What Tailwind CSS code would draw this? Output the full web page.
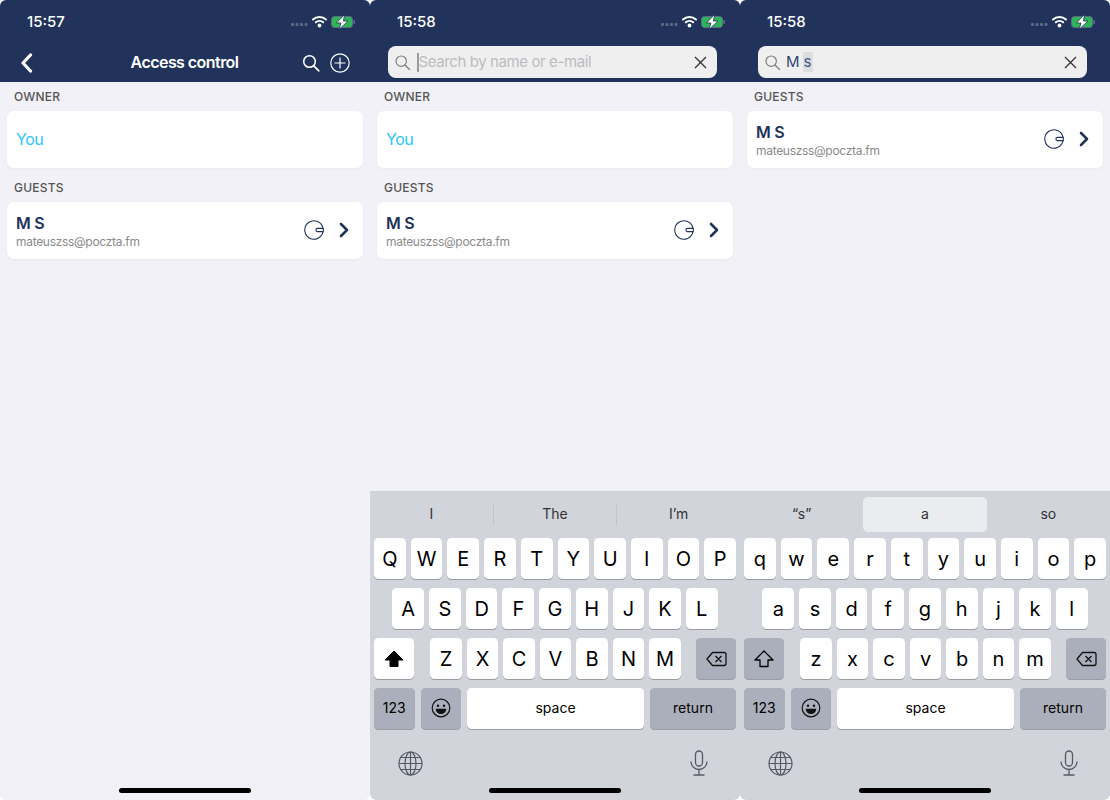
<!DOCTYPE html>
<html><head><meta charset="utf-8"><script src="https://cdn.jsdelivr.net/npm/@tailwindcss/browser@4"></script></head>
<body class="bg-white">
<div class="flex w-[1110px] h-[800px] overflow-hidden font-['Inter','Liberation_Sans',sans-serif]">

<!-- Phone 1 -->
<section class="w-[370px] h-[800px] shrink-0 flex flex-col bg-[#f1f1f7] rounded-[6px] overflow-hidden relative">
  <header class="h-[82px] bg-[#21335b] shrink-0 flex flex-col">
    <div class="h-[44px] flex items-center justify-between pl-[27px] pr-[15px] text-white text-[15px] font-medium">
      <span>15:57</span>
      <svg width="64" height="14" viewBox="0 0 64 14"><g fill="#5d6a88"><rect x="0" y="8" width="3" height="3" rx="1"/><rect x="4.5" y="8" width="3" height="3" rx="1"/><rect x="9" y="8" width="3" height="3" rx="1"/><rect x="13.5" y="8" width="3" height="3" rx="1"/></g><g fill="none" stroke="#fff" stroke-width="2" stroke-linecap="round"><path d="M22 4.5a9.5 9.5 0 0 1 13 0"/><path d="M24.8 7.3a5.6 5.6 0 0 1 7.4 0"/></g><circle cx="28.5" cy="10.5" r="1.9" fill="#fff"/><rect x="40.5" y="1.5" width="21" height="11" rx="3" fill="#2fb457" stroke="#5d6a88"/><rect x="62.3" y="5" width="1.7" height="4" rx="0.8" fill="#5d6a88"/><path d="M53.5 -0.5 45.5 8h4.5l-2 6.5L57 6h-4.5z" fill="#fff" stroke="#21335b" stroke-width="0.8"/></svg>
    </div>
    <div class="h-[38px] flex items-center justify-between pl-[20px] pr-[20px] relative">
      <svg width="13" height="20" viewBox="0 0 13 20"><path d="M10.5 2 3 10l7.5 8" fill="none" stroke="#fff" stroke-width="3.2" stroke-linecap="round" stroke-linejoin="round"/></svg>
      <h1 class="absolute left-0 right-0 pb-[2px] pr-[1px] text-center text-white text-[16px] font-semibold tracking-[-0.55px]">Access control</h1>
      <div class="flex items-center gap-[10px]">
        <svg width="18" height="18" viewBox="0 0 18 18"><circle cx="7.5" cy="7.5" r="5.8" fill="none" stroke="#fff" stroke-width="1.5"/><path d="m11.8 11.8 5 5" stroke="#fff" stroke-width="1.7" stroke-linecap="round"/></svg>
        <svg width="20" height="20" viewBox="0 0 20 20"><circle cx="10" cy="10" r="9.2" fill="none" stroke="#fff" stroke-width="1.2"/><path d="M10 4.5v11M4.5 10h11" stroke="#fff" stroke-width="1.2"/></svg>
      </div>
    </div>
  </header>
  <main class="px-[7px]">
    <h2 class="pl-[7px] h-[29px] flex items-center text-[12px] tracking-[0.2px] font-medium text-[#555] uppercase">Owner</h2>
    <div class="h-[57px] pb-[2px] bg-white rounded-[7px] flex items-center px-[9px] text-[16px] tracking-[-0.5px] text-[#2cc5fa] shadow-[0_1px_3px_rgba(0,0,0,0.04)]">You</div>
    <h2 class="pl-[7px] mt-[5px] h-[29px] flex items-center text-[12px] tracking-[0.2px] font-medium text-[#555] uppercase">Guests</h2>
    <div class="h-[57px] pb-[1px] bg-white rounded-[7px] flex items-center pl-[9px] pr-[14px] shadow-[0_1px_3px_rgba(0,0,0,0.04)]">
      <div class="flex-1 pt-[3px]"><p class="text-[16px] leading-[19px] font-semibold text-[#21335b] tracking-[-0.3px]">M S</p><p class="text-[12px] leading-[17px] text-[#8a8a8a] tracking-[-0.3px]">mateuszss@poczta.fm</p></div>
      <svg width="20" height="20" viewBox="0 0 20 20"><path d="M19 8.3A9.2 9.2 0 1 0 19 11.7" fill="none" stroke="#21335b" stroke-width="1.1"/><path d="M19.3 8.4H13.5a1.6 1.6 0 0 0 0 3.2h5.8z" fill="#fff" stroke="#21335b" stroke-width="1.1"/></svg>
      <svg class="ml-[15px]" width="10" height="16" viewBox="0 0 10 16"><path d="m2 2 6 6-6 6" fill="none" stroke="#21335b" stroke-width="2.6" stroke-linecap="round" stroke-linejoin="round"/></svg>
    </div>
  </main>
  <div class="absolute left-[119px] bottom-[7px] w-[132px] h-[5px] rounded-full bg-black"></div>
</section>

<!-- Phone 2 -->
<section class="w-[370px] h-[800px] shrink-0 flex flex-col bg-[#f1f1f7] rounded-[6px] overflow-hidden relative">
  <header class="h-[82px] bg-[#21335b] shrink-0 flex flex-col">
    <div class="h-[44px] flex items-center justify-between pl-[27px] pr-[15px] text-white text-[15px] font-medium">
      <span>15:58</span>
      <svg width="64" height="14" viewBox="0 0 64 14"><g fill="#5d6a88"><rect x="0" y="8" width="3" height="3" rx="1"/><rect x="4.5" y="8" width="3" height="3" rx="1"/><rect x="9" y="8" width="3" height="3" rx="1"/><rect x="13.5" y="8" width="3" height="3" rx="1"/></g><g fill="none" stroke="#fff" stroke-width="2" stroke-linecap="round"><path d="M22 4.5a9.5 9.5 0 0 1 13 0"/><path d="M24.8 7.3a5.6 5.6 0 0 1 7.4 0"/></g><circle cx="28.5" cy="10.5" r="1.9" fill="#fff"/><rect x="40.5" y="1.5" width="21" height="11" rx="3" fill="#2fb457" stroke="#5d6a88"/><rect x="62.3" y="5" width="1.7" height="4" rx="0.8" fill="#5d6a88"/><path d="M53.5 -0.5 45.5 8h4.5l-2 6.5L57 6h-4.5z" fill="#fff" stroke="#21335b" stroke-width="0.8"/></svg>
    </div>
    <div class="ml-[18px] w-[329px] h-[32px] mt-[2px] bg-[#efeff0] rounded-[8px] flex items-center pl-[7px] pr-[10px]">
      <svg width="15" height="15" viewBox="0 0 15 15"><circle cx="6.2" cy="6.2" r="5.2" fill="none" stroke="#7d7d7d" stroke-width="1.2"/><path d="m10 10 4.5 4.5" stroke="#7d7d7d" stroke-width="1.3" stroke-linecap="round"/></svg>
      <span class="ml-[7px] w-[1.5px] h-[19px] bg-[#9a9aa0]"></span>
      <span class="flex-1 text-[15px] tracking-[-0.4px] text-[#bcbcbe]">Search by name or e-mail</span>
      <svg width="13" height="13" viewBox="0 0 13 13"><path d="m1 1 11 11M12 1 1 12" stroke="#333" stroke-width="1.3"/></svg>
    </div>
  </header>
  <main class="px-[7px]">
    <h2 class="pl-[7px] h-[29px] flex items-center text-[12px] tracking-[0.2px] font-medium text-[#555] uppercase">Owner</h2>
    <div class="h-[57px] pb-[2px] bg-white rounded-[7px] flex items-center px-[9px] text-[16px] tracking-[-0.5px] text-[#2cc5fa] shadow-[0_1px_3px_rgba(0,0,0,0.04)]">You</div>
    <h2 class="pl-[7px] mt-[5px] h-[29px] flex items-center text-[12px] tracking-[0.2px] font-medium text-[#555] uppercase">Guests</h2>
    <div class="h-[57px] pb-[1px] bg-white rounded-[7px] flex items-center pl-[9px] pr-[14px] shadow-[0_1px_3px_rgba(0,0,0,0.04)]">
      <div class="flex-1 pt-[3px]"><p class="text-[16px] leading-[19px] font-semibold text-[#21335b] tracking-[-0.3px]">M S</p><p class="text-[12px] leading-[17px] text-[#8a8a8a] tracking-[-0.3px]">mateuszss@poczta.fm</p></div>
      <svg width="20" height="20" viewBox="0 0 20 20"><path d="M19 8.3A9.2 9.2 0 1 0 19 11.7" fill="none" stroke="#21335b" stroke-width="1.1"/><path d="M19.3 8.4H13.5a1.6 1.6 0 0 0 0 3.2h5.8z" fill="#fff" stroke="#21335b" stroke-width="1.1"/></svg>
      <svg class="ml-[15px]" width="10" height="16" viewBox="0 0 10 16"><path d="m2 2 6 6-6 6" fill="none" stroke="#21335b" stroke-width="2.6" stroke-linecap="round" stroke-linejoin="round"/></svg>
    </div>
  </main>
  <div class="mt-auto h-[309px] bg-[#d1d4db] rounded-b-[6px] flex flex-col text-black">
    <div class="h-[47px] flex items-center pb-[2px] text-[14px] text-[#333]">
      <span class="flex-1 flex items-center justify-center">I</span>
      <span class="w-px h-[22px] bg-[#c2c5cd]"></span>
      <span class="flex-1 flex items-center justify-center">The</span>
      <span class="w-px h-[22px] bg-[#c2c5cd]"></span>
      <span class="flex-1 flex items-center justify-center">I’m</span>
    </div>
    <div class="flex gap-[5px] px-[4px] h-[41px] text-[20px] *:flex-1 *:flex *:items-center *:justify-center *:bg-white *:rounded-[4.5px] *:shadow-[0_1px_0_#9a9ca3]">
      <span>Q</span><span>W</span><span>E</span><span>R</span><span>T</span><span>Y</span><span>U</span><span>I</span><span>O</span><span>P</span>
    </div>
    <div class="flex gap-[5px] justify-center mt-[9px] h-[41px] text-[20px] *:w-[31.7px] *:flex *:items-center *:justify-center *:bg-white *:rounded-[4.5px] *:shadow-[0_1px_0_#9a9ca3]">
      <span>A</span><span>S</span><span>D</span><span>F</span><span>G</span><span>H</span><span>J</span><span>K</span><span>L</span>
    </div>
    <div class="flex px-[4px] justify-between mt-[9px] h-[41px] text-[20px]">
      <div class="w-[40px] bg-white rounded-[4.5px] shadow-[0_1px_0_#9a9ca3] flex items-center justify-center"><svg width="20" height="18" viewBox="0 0 20 18"><path d="M10 1 1 10h5v6.5h8V10h5z" fill="#000" stroke="#000" stroke-linejoin="round"/></svg></div>
      <div class="ml-[1px] flex gap-[5px] *:w-[31.5px] *:flex *:items-center *:justify-center *:bg-white *:rounded-[4.5px] *:shadow-[0_1px_0_#9a9ca3]"><span>Z</span><span>X</span><span>C</span><span>V</span><span>B</span><span>N</span><span>M</span></div>
      <div class="w-[40px] bg-[#abafbb] rounded-[4.5px] shadow-[0_1px_0_#9a9ca3] flex items-center justify-center"><svg width="21" height="16" viewBox="0 0 21 16"><path d="M6.5 1.5H18a2 2 0 0 1 2 2v9a2 2 0 0 1-2 2H6.5L1 8zM9.5 5l6 6M15.5 5l-6 6" fill="none" stroke="#111" stroke-width="1.3" stroke-linejoin="round"/></svg></div>
    </div>
    <div class="flex gap-[6px] px-[4px] mt-[9px] h-[41px] text-[14px] *:pb-[2px]">
      <div class="w-[40.5px] bg-[#abafbb] rounded-[4.5px] shadow-[0_1px_0_#9a9ca3] flex items-center justify-center">123</div>
      <div class="w-[40.5px] bg-[#abafbb] rounded-[4.5px] shadow-[0_1px_0_#9a9ca3] flex items-center justify-center"><svg width="20" height="20" viewBox="0 0 20 20"><circle cx="10" cy="10" r="8.8" fill="none" stroke="#111" stroke-width="1.2"/><circle cx="7" cy="7.7" r="1.2" fill="#111"/><circle cx="13" cy="7.7" r="1.2" fill="#111"/><path d="M4.7 10.8h10.6a5.3 5.3 0 0 1-10.6 0z" fill="#111"/></svg></div>
      <div class="flex-1 bg-white rounded-[4.5px] shadow-[0_1px_0_#9a9ca3] flex items-center justify-center">space</div>
      <div class="w-[86px] bg-[#abafbb] rounded-[4.5px] shadow-[0_1px_0_#9a9ca3] flex items-center justify-center">return</div>
    </div>
    <div class="flex justify-between items-center pl-[28px] pr-[32px] mt-[21px]">
      <svg width="25" height="25" viewBox="0 0 25 25" fill="none" stroke="#555962" stroke-width="1.2"><circle cx="12.5" cy="12.5" r="11.5"/><ellipse cx="12.5" cy="12.5" rx="5.5" ry="11.5"/><path d="M12.5 1v23M1 12.5h23M2.7 6.5h19.6M2.7 18.5h19.6"/></svg>
      <svg width="18" height="26" viewBox="0 0 18 26" fill="none" stroke="#555962" stroke-width="1.3"><rect x="5.5" y="1" width="7" height="15" rx="3.5"/><path d="M1 11.5a8 8 0 0 0 16 0M9 19.5V25M3.5 25h11"/></svg>
    </div>
  </div>
  <div class="absolute left-[119px] bottom-[7px] w-[132px] h-[5px] rounded-full bg-black"></div>
</section>

<!-- Phone 3 -->
<section class="w-[370px] h-[800px] shrink-0 flex flex-col bg-[#f1f1f7] rounded-[6px] overflow-hidden relative">
  <header class="h-[82px] bg-[#21335b] shrink-0 flex flex-col">
    <div class="h-[44px] flex items-center justify-between pl-[27px] pr-[15px] text-white text-[15px] font-medium">
      <span>15:58</span>
      <svg width="64" height="14" viewBox="0 0 64 14"><g fill="#5d6a88"><rect x="0" y="8" width="3" height="3" rx="1"/><rect x="4.5" y="8" width="3" height="3" rx="1"/><rect x="9" y="8" width="3" height="3" rx="1"/><rect x="13.5" y="8" width="3" height="3" rx="1"/></g><g fill="none" stroke="#fff" stroke-width="2" stroke-linecap="round"><path d="M22 4.5a9.5 9.5 0 0 1 13 0"/><path d="M24.8 7.3a5.6 5.6 0 0 1 7.4 0"/></g><circle cx="28.5" cy="10.5" r="1.9" fill="#fff"/><rect x="40.5" y="1.5" width="21" height="11" rx="3" fill="#2fb457" stroke="#5d6a88"/><rect x="62.3" y="5" width="1.7" height="4" rx="0.8" fill="#5d6a88"/><path d="M53.5 -0.5 45.5 8h4.5l-2 6.5L57 6h-4.5z" fill="#fff" stroke="#21335b" stroke-width="0.8"/></svg>
    </div>
    <div class="ml-[18px] w-[329px] h-[32px] mt-[2px] bg-[#efeff0] rounded-[8px] flex items-center pl-[7px] pr-[10px]">
      <svg width="15" height="15" viewBox="0 0 15 15"><circle cx="6.2" cy="6.2" r="5.2" fill="none" stroke="#7d7d7d" stroke-width="1.2"/><path d="m10 10 4.5 4.5" stroke="#7d7d7d" stroke-width="1.3" stroke-linecap="round"/></svg>
      <span class="ml-[6px] text-[15px] text-[#2f4570]">M</span>
      <span class="ml-[3px] w-[10px] h-[20px] text-[15px] leading-[20px] text-center bg-[#dcdee1] text-[#3f5587]">s</span>
      <span class="flex-1"></span>
      <svg width="13" height="13" viewBox="0 0 13 13"><path d="m1 1 11 11M12 1 1 12" stroke="#333" stroke-width="1.3"/></svg>
    </div>
  </header>
  <main class="px-[7px]">
    <h2 class="pl-[7px] h-[29px] flex items-center text-[12px] tracking-[0.2px] font-medium text-[#555] uppercase">Guests</h2>
    <div class="h-[57px] pb-[1px] bg-white rounded-[7px] flex items-center pl-[9px] pr-[14px] shadow-[0_1px_3px_rgba(0,0,0,0.04)]">
      <div class="flex-1 pt-[3px]"><p class="text-[16px] leading-[19px] font-semibold text-[#21335b] tracking-[-0.3px]">M S</p><p class="text-[12px] leading-[17px] text-[#8a8a8a] tracking-[-0.3px]">mateuszss@poczta.fm</p></div>
      <svg width="20" height="20" viewBox="0 0 20 20"><path d="M19 8.3A9.2 9.2 0 1 0 19 11.7" fill="none" stroke="#21335b" stroke-width="1.1"/><path d="M19.3 8.4H13.5a1.6 1.6 0 0 0 0 3.2h5.8z" fill="#fff" stroke="#21335b" stroke-width="1.1"/></svg>
      <svg class="ml-[15px]" width="10" height="16" viewBox="0 0 10 16"><path d="m2 2 6 6-6 6" fill="none" stroke="#21335b" stroke-width="2.6" stroke-linecap="round" stroke-linejoin="round"/></svg>
    </div>
  </main>
  <div class="mt-auto h-[309px] bg-[#d1d4db] rounded-b-[6px] flex flex-col text-black">
    <div class="h-[47px] pt-[6px] flex text-[14px] text-[#333] *:flex-1 *:flex *:items-center *:justify-center *:h-[35px] *:pb-[2px]">
      <span>“s”</span><span class="bg-[#ebecf0] rounded-[5px]">a</span><span>so</span>
    </div>
    <div class="flex gap-[5px] px-[4px] h-[41px] text-[20px] *:flex-1 *:flex *:items-center *:justify-center *:bg-white *:rounded-[4.5px] *:shadow-[0_1px_0_#9a9ca3]">
      <span>q</span><span>w</span><span>e</span><span>r</span><span>t</span><span>y</span><span>u</span><span>i</span><span>o</span><span>p</span>
    </div>
    <div class="flex gap-[5px] justify-center mt-[9px] h-[41px] text-[20px] *:w-[31.7px] *:flex *:items-center *:justify-center *:bg-white *:rounded-[4.5px] *:shadow-[0_1px_0_#9a9ca3]">
      <span>a</span><span>s</span><span>d</span><span>f</span><span>g</span><span>h</span><span>j</span><span>k</span><span>l</span>
    </div>
    <div class="flex px-[4px] justify-between mt-[9px] h-[41px] text-[20px]">
      <div class="w-[40px] bg-[#abafbb] rounded-[4.5px] shadow-[0_1px_0_#9a9ca3] flex items-center justify-center"><svg width="20" height="18" viewBox="0 0 20 18"><path d="M10 1 1 10h5v6.5h8V10h5z" fill="none" stroke="#000" stroke-width="1.3" stroke-linejoin="round"/></svg></div>
      <div class="ml-[1px] flex gap-[5px] *:w-[31.5px] *:flex *:items-center *:justify-center *:bg-white *:rounded-[4.5px] *:shadow-[0_1px_0_#9a9ca3]"><span>z</span><span>x</span><span>c</span><span>v</span><span>b</span><span>n</span><span>m</span></div>
      <div class="w-[40px] bg-[#abafbb] rounded-[4.5px] shadow-[0_1px_0_#9a9ca3] flex items-center justify-center"><svg width="21" height="16" viewBox="0 0 21 16"><path d="M6.5 1.5H18a2 2 0 0 1 2 2v9a2 2 0 0 1-2 2H6.5L1 8zM9.5 5l6 6M15.5 5l-6 6" fill="none" stroke="#111" stroke-width="1.3" stroke-linejoin="round"/></svg></div>
    </div>
    <div class="flex gap-[6px] px-[4px] mt-[9px] h-[41px] text-[14px] *:pb-[2px]">
      <div class="w-[40.5px] bg-[#abafbb] rounded-[4.5px] shadow-[0_1px_0_#9a9ca3] flex items-center justify-center">123</div>
      <div class="w-[40.5px] bg-[#abafbb] rounded-[4.5px] shadow-[0_1px_0_#9a9ca3] flex items-center justify-center"><svg width="20" height="20" viewBox="0 0 20 20"><circle cx="10" cy="10" r="8.8" fill="none" stroke="#111" stroke-width="1.2"/><circle cx="7" cy="7.7" r="1.2" fill="#111"/><circle cx="13" cy="7.7" r="1.2" fill="#111"/><path d="M4.7 10.8h10.6a5.3 5.3 0 0 1-10.6 0z" fill="#111"/></svg></div>
      <div class="flex-1 bg-white rounded-[4.5px] shadow-[0_1px_0_#9a9ca3] flex items-center justify-center">space</div>
      <div class="w-[86px] bg-[#abafbb] rounded-[4.5px] shadow-[0_1px_0_#9a9ca3] flex items-center justify-center">return</div>
    </div>
    <div class="flex justify-between items-center pl-[28px] pr-[32px] mt-[21px]">
      <svg width="25" height="25" viewBox="0 0 25 25" fill="none" stroke="#555962" stroke-width="1.2"><circle cx="12.5" cy="12.5" r="11.5"/><ellipse cx="12.5" cy="12.5" rx="5.5" ry="11.5"/><path d="M12.5 1v23M1 12.5h23M2.7 6.5h19.6M2.7 18.5h19.6"/></svg>
      <svg width="18" height="26" viewBox="0 0 18 26" fill="none" stroke="#555962" stroke-width="1.3"><rect x="5.5" y="1" width="7" height="15" rx="3.5"/><path d="M1 11.5a8 8 0 0 0 16 0M9 19.5V25M3.5 25h11"/></svg>
    </div>
  </div>
  <div class="absolute left-[119px] bottom-[7px] w-[132px] h-[5px] rounded-full bg-black"></div>
</section>
</div>
</body></html>
